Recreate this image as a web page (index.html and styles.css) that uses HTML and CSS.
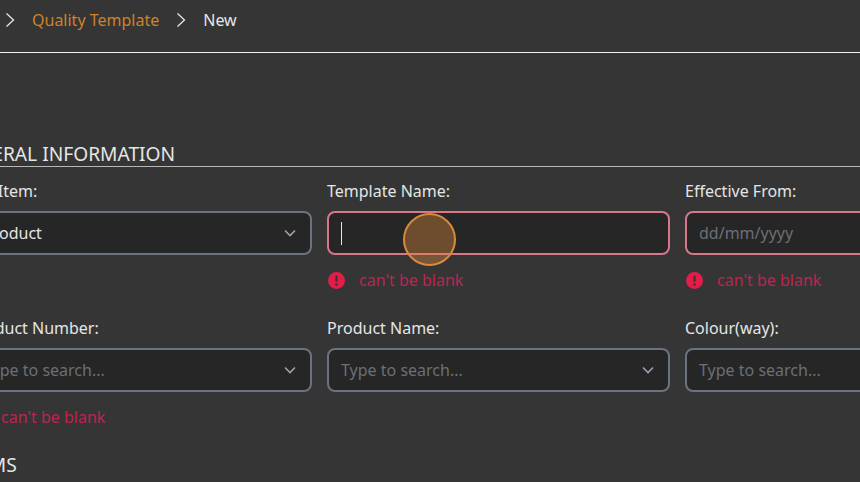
FILE: index.html
```html
<!DOCTYPE html>
<html>
<head>
<meta charset="utf-8"/>
<title>New Quality Template</title>
<link rel="stylesheet" href="styles.css">
</head>
<body>
<div class="page">
  <nav class="crumbs">
    <svg class="crumb-sep" viewBox="0 0 10 16"><path d="M1.5 1.5 8.5 8 1.5 14.5"/></svg>
    <a class="crumb-link">Quality Template</a>
    <svg class="crumb-sep" viewBox="0 0 10 16"><path d="M1.5 1.5 8.5 8 1.5 14.5"/></svg>
    <span class="crumb-current">New</span>
  </nav>

  <h2 class="section first">GENERAL INFORMATION</h2>
  <div class="fields">
    <div class="field">
      <label>For Item:</label>
      <div class="control">
        <span class="value">Product</span>
        <svg class="caret" viewBox="0 0 12 8"><path d="M1 1.5 6 6.5 11 1.5"/></svg>
      </div>
    </div>
    <div class="field">
      <label>Template Name:</label>
      <div class="control invalid"><span class="cursor"></span></div>
      <div class="error">
        <svg class="error-icon" viewBox="0 0 16 16"><circle cx="8" cy="8" r="8"/><rect class="mark" x="7" y="3.4" width="2" height="6" rx="1"/><circle class="mark" cx="8" cy="11.8" r="1.2"/></svg>
        <span>can't be blank</span>
      </div>
    </div>
    <div class="field">
      <label>Effective From:</label>
      <div class="control invalid"><span class="placeholder">dd/mm/yyyy</span></div>
      <div class="error">
        <svg class="error-icon" viewBox="0 0 16 16"><circle cx="8" cy="8" r="8"/><rect class="mark" x="7" y="3.4" width="2" height="6" rx="1"/><circle class="mark" cx="8" cy="11.8" r="1.2"/></svg>
        <span>can't be blank</span>
      </div>
    </div>
    <div class="field">
      <label>Product Number:</label>
      <div class="control">
        <span class="placeholder">Type to search...</span>
        <svg class="caret" viewBox="0 0 12 8"><path d="M1 1.5 6 6.5 11 1.5"/></svg>
      </div>
      <div class="error">
        <svg class="error-icon" viewBox="0 0 16 16"><circle cx="8" cy="8" r="8"/><rect class="mark" x="7" y="3.4" width="2" height="6" rx="1"/><circle class="mark" cx="8" cy="11.8" r="1.2"/></svg>
        <span>can't be blank</span>
      </div>
    </div>
    <div class="field">
      <label>Product Name:</label>
      <div class="control">
        <span class="placeholder">Type to search...</span>
        <svg class="caret" viewBox="0 0 12 8"><path d="M1 1.5 6 6.5 11 1.5"/></svg>
      </div>
    </div>
    <div class="field">
      <label>Colour(way):</label>
      <div class="control">
        <span class="placeholder">Type to search...</span>
        <svg class="caret" viewBox="0 0 12 8"><path d="M1 1.5 6 6.5 11 1.5"/></svg>
      </div>
    </div>
  </div>

  <h2 class="section last">ITEMS</h2>
</div>
<div class="click-mark"></div>
</body>
</html>
```

FILE: styles.css
```css
html, body {
  height: 100%;
}

body {
  margin: 0;
  background-color: #353535;
  color: #e5e5e5;
  font-family: "Noto Sans", sans-serif;
  font-size: 16px;
  overflow: hidden;
}

/* the page is scrolled sideways in the shot, so the first column is cut off */
.page {
  width: 1100px;
  margin-left: -31px;
}

.crumbs {
  display: flex;
  align-items: center;
  gap: 17px;
  height: 40px;
  padding: 0 0 12px 36px;
  border-bottom: 1px solid #f0f0f0;
}

.crumb-sep {
  width: 10px;
  height: 16px;
  fill: none;
  stroke: #e5e5e5;
  stroke-width: 1.3;
}

.crumb-link {
  color: #cf8229;
}

.crumb-current {
  color: #e5e5e5;
}

.section {
  margin: 0;
  font-size: 19.2px;
  font-weight: 400;
  line-height: 24px;
}

.section.first {
  margin: 89px 0 0 -16px;
  border-bottom: 1px solid #b8b8b8;
}

.section.last {
  margin-left: -8px;
}

.fields {
  display: grid;
  grid-template-columns: repeat(3, 343px);
  grid-template-rows: 137px 137px;
  column-gap: 15px;
  margin-top: 12px;
}

.field label {
  display: block;
  height: 24px;
  line-height: 24px;
  margin-bottom: 8px;
}

.control {
  display: flex;
  align-items: center;
  justify-content: space-between;
  box-sizing: border-box;
  height: 44px;
  padding: 0 12px;
  background-color: #262626;
  border: 2px solid #6b7280;
  border-radius: 8px;
}

.control.invalid {
  border-color: #d9778a;
}

.placeholder {
  color: #6b6f76;
}

.cursor {
  width: 1px;
  height: 23px;
  background-color: #e5e5e5;
}

.caret {
  width: 12px;
  height: 8px;
  margin-right: 2px;
  fill: none;
  stroke: #9ca3af;
  stroke-width: 1.6;
}

.error {
  display: flex;
  align-items: center;
  gap: 14px;
  margin-top: 13px;
  padding-left: 1px;
  line-height: 24px;
  color: #be2450;
}

.error-icon {
  width: 17px;
  height: 17px;
  fill: #e11d48;
}

.error-icon .mark {
  fill: #353535;
}

.click-mark {
  position: absolute;
  left: 403px;
  top: 213px;
  width: 53px;
  height: 53px;
  box-sizing: border-box;
  border: 2px solid #d98a3a;
  border-radius: 50%;
  background-color: rgba(217, 138, 58, 0.4);
}
```
